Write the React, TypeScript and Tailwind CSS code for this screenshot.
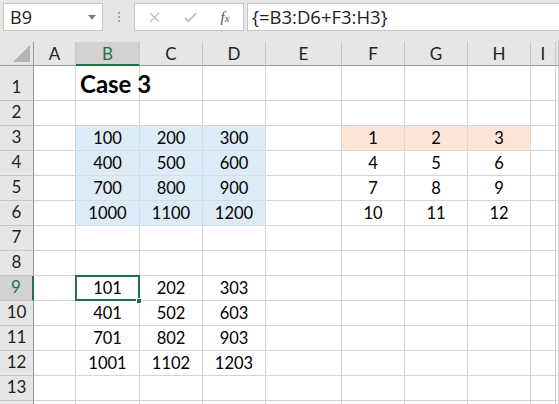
import React from "react";

const COLS = ["A", "B", "C", "D", "E", "F", "G", "H", "I", ""];

type Cell = { v: string; fill?: "blue" | "orange"; bold?: boolean; left?: boolean };

const DATA: Record<number, Record<string, Cell>> = {
  1: { B: { v: "Case 3", bold: true, left: true } },
  3: {
    B: { v: "100", fill: "blue" }, C: { v: "200", fill: "blue" }, D: { v: "300", fill: "blue" },
    F: { v: "1", fill: "orange" }, G: { v: "2", fill: "orange" }, H: { v: "3", fill: "orange" },
  },
  4: {
    B: { v: "400", fill: "blue" }, C: { v: "500", fill: "blue" }, D: { v: "600", fill: "blue" },
    F: { v: "4" }, G: { v: "5" }, H: { v: "6" },
  },
  5: {
    B: { v: "700", fill: "blue" }, C: { v: "800", fill: "blue" }, D: { v: "900", fill: "blue" },
    F: { v: "7" }, G: { v: "8" }, H: { v: "9" },
  },
  6: {
    B: { v: "1000", fill: "blue" }, C: { v: "1100", fill: "blue" }, D: { v: "1200", fill: "blue" },
    F: { v: "10" }, G: { v: "11" }, H: { v: "12" },
  },
  9: { B: { v: "101" }, C: { v: "202" }, D: { v: "303" } },
  10: { B: { v: "401" }, C: { v: "502" }, D: { v: "603" } },
  11: { B: { v: "701" }, C: { v: "802" }, D: { v: "903" } },
  12: { B: { v: "1001" }, C: { v: "1102" }, D: { v: "1203" } },
};

// row 14 is only a sliver at the bottom edge, so it gets no label
const ROWS = Array.from({ length: 14 }, (_, i) => i + 1);

function FormulaBar() {
  return (
    <div className="h-[42px] bg-[#e6e6e6] flex items-start pt-[3px] pl-[3px] font-['Open_Sans',sans-serif]">
      <div className="w-[100px] h-[28px] bg-white border border-[#c6c6c6] flex items-center justify-between pl-[6px] pr-[6px]">
        <span className="text-[18px] text-[#222] leading-none">B9</span>
        <svg width="8" height="5" viewBox="0 0 8 5">
          <path d="M0 0 L8 0 L4 4.5 Z" fill="#777" />
        </svg>
      </div>
      <div className="w-[31px] h-[28px] flex flex-col items-center justify-center gap-[2px]">
        <span className="w-[2px] h-[2px] bg-[#a8a8a8]" />
        <span className="w-[2px] h-[2px] bg-[#a8a8a8]" />
        <span className="w-[2px] h-[2px] bg-[#a8a8a8]" />
      </div>
      <div className="w-[110px] h-[28px] bg-white border border-[#c6c6c6] flex items-center">
        <div className="w-[38px] flex justify-center">
          <svg width="11" height="11" viewBox="0 0 11 11">
            <path d="M1 1 L10 10 M10 1 L1 10" stroke="#bdbdbd" strokeWidth="1.3" />
          </svg>
        </div>
        <div className="w-[34px] flex justify-center">
          <svg width="13" height="11" viewBox="0 0 13 11">
            <path d="M1 6 L4.5 9.5 L12 1" stroke="#bdbdbd" strokeWidth="1.8" fill="none" />
          </svg>
        </div>
        <div className="w-[36px] flex justify-center">
          <span className="font-['Liberation_Serif',serif] italic text-[#555] text-[15px] leading-none">
            f<span className="text-[11px]">x</span>
          </span>
        </div>
      </div>
      <div className="ml-[3px] flex-1 h-[28px] bg-white border border-r-0 border-[#c6c6c6] flex items-center pl-[4px]">
        <span className="text-[18.5px] text-[#222] leading-none">{"{=B3:D6+F3:H3}"}</span>
      </div>
    </div>
  );
}

function Sheet() {
  return (
    <div className="grid grid-cols-[34px_42px_64px_63px_63px_76px_63px_63px_63px_25px_1fr] grid-rows-[24px_35px_repeat(13,25px)] font-['Lato',sans-serif] text-[16px] leading-none">
      {/* corner */}
      <div className="bg-[#e6e6e6] border-r border-b border-[#9b9b9b] flex items-end justify-end pr-[3px] pb-[3px]">
        <svg width="17" height="17" viewBox="0 0 17 17">
          <path d="M17 0 L17 17 L0 17 Z" fill="#b4b4b4" />
        </svg>
      </div>
      {COLS.map((c) =>
        c === "B" ? (
          <div
            key={c}
            className="bg-[#d2d2d2] border-r border-[#c6c6c6] border-b-2 border-b-[#217346] flex items-center justify-center text-[#217346] text-[17px]"
          >
            {c}
          </div>
        ) : (
          <div
            key={c}
            className="bg-[#e6e6e6] border-r border-[#c6c6c6] border-b border-b-[#9b9b9b] flex items-center justify-center text-[#222] text-[17px]"
          >
            {c}
          </div>
        )
      )}
      {ROWS.map((r) => (
        <React.Fragment key={r}>
          {r === 9 ? (
            <div className="bg-[#d2d2d2] border-b border-[#c6c6c6] border-r-2 border-r-[#217346] flex items-end justify-center pb-[5px] text-[#217346] text-[17px]">
              {r}
            </div>
          ) : (
            <div className="bg-[#e6e6e6] border-b border-[#c6c6c6] border-r border-r-[#9b9b9b] flex items-end justify-center pb-[5px] text-[#222] text-[17px]">
              {r < 14 ? r : ""}
            </div>
          )}
          {COLS.map((c) => {
            const cell = DATA[r]?.[c];
            const fill =
              cell?.fill === "blue"
                ? "bg-[#ddebf7] border-[#d3dde8]"
                : cell?.fill === "orange"
                ? "bg-[#fce4d6] border-[#e4d6ce]"
                : "bg-white border-[#d4d4d4]";
            const selected = r === 9 && c === "B";
            return (
              <div
                key={c}
                className={`relative border-r border-b ${fill} flex items-end pb-[4px] whitespace-nowrap ${
                  cell?.left ? "justify-start pl-[4px] overflow-visible z-10" : "justify-center"
                } ${selected ? "z-10" : ""}`}
              >
                {cell && (
                  <span className={cell.bold ? "font-bold text-[24px] text-black" : "text-black text-[16.5px]"}>{cell.v}</span>
                )}
                {selected && (
                  <>
                    <div className="absolute -left-px -top-px -right-px -bottom-px border-2 border-[#217346]" />
                    <div className="absolute -right-[3px] -bottom-[4px] w-[6px] h-[6px] bg-[#217346] border border-white" />
                  </>
                )}
              </div>
            );
          })}
        </React.Fragment>
      ))}
    </div>
  );
}

export default function App() {
  return (
    <div className="w-[559px] h-[404px] overflow-hidden bg-white">
      <FormulaBar />
      <Sheet />
    </div>
  );
}
